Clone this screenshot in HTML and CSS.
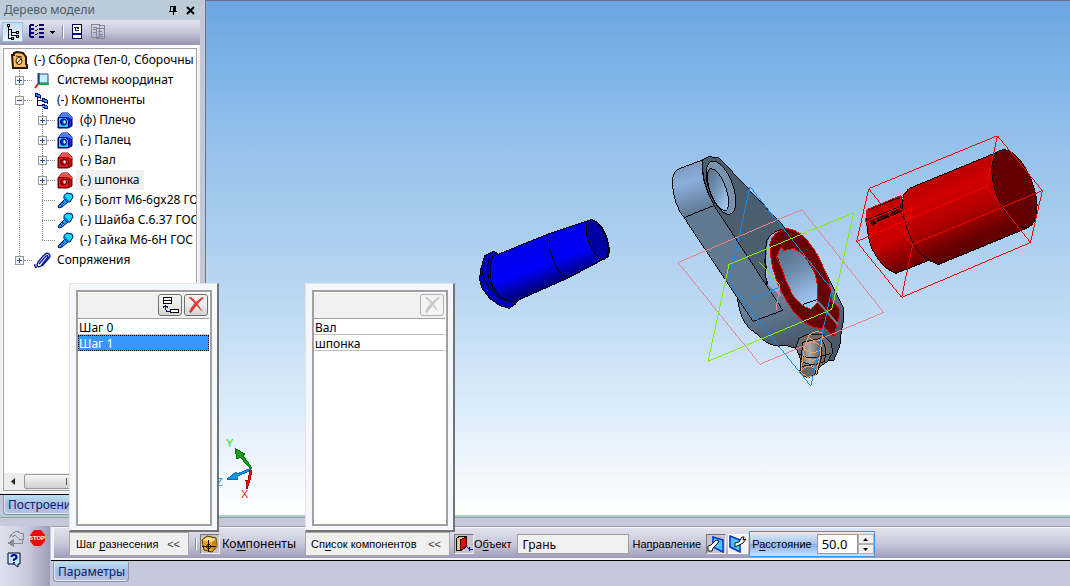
FILE: index.html
```html
<!DOCTYPE html>
<html lang="ru">
<head>
<meta charset="utf-8">
<title>Сборка</title>
<link rel="stylesheet" href="styles.css">
</head>
<body>
<svg class="defs" width="0" height="0" aria-hidden="true">
  <defs>
    <symbol id="part" viewBox="0 0 17 17">
      <path class="part-side" d="M1 6 5 1h6l4 4v9l-4 2H1z"/>
      <path class="part-top" d="M5 1h6l4 4v2l-4-2H2z"/>
      <path class="part-face" d="M1.500 5.500h7l3 3v7h-10z"/>
      <ellipse cx="6.500" cy="10" rx="3" ry="3.200" class="part-hole"/>
      <path d="M7 8q2 0 2 2.500L7.500 12 6 10z" class="part-shine"/>
    </symbol>
    <symbol id="bolt" viewBox="0 0 17 17">
      <path d="M2 13 8 7l3 3-6 5-3 1-1-1z" fill="#19a5d8" stroke="#000080"/>
      <path d="M3 12l2 2M5 10l2 2" stroke="#000080"/>
      <path d="M7 3.500 10 1l5 1 1 3-3 5-3 0-3-3z" fill="#00e0f0" stroke="#000080"/>
      <path d="M7 4v3l3 3h3z" fill="#0860d0"/>
    </symbol>
    <symbol id="cross" viewBox="0 0 18 18">
      <path d="M1.500 1.500 4 1q4 3 6 6t6 9q-4-3-7-7T1.500 1.500z" fill="currentColor"/>
      <path d="M15 1l2 1q-4 3-7 7t-6 8l-2-1q2-5 5-8t8-7z" fill="currentColor"/>
    </symbol>
  </defs>
</svg>
<div class="app">
  <main class="workspace">
    <aside class="sidebar">
      <header class="panel-title">
        <h1>Дерево модели</h1>
        <button class="plain" aria-label="Закрепить"><svg width="9" height="10" shape-rendering="crispEdges"><path d="M1 1h6v5h1v1H0V6h1zM4 7h1v3H4z" fill="#000"/><path d="M2 2h2v4H2z" fill="#bccbd8"/></svg></button>
        <button class="plain" aria-label="Закрыть"><svg width="9" height="9"><path d="M1 1l7 7M8 1 1 8" stroke="#000" stroke-width="2"/></svg></button>
      </header>
      <div class="tree-tools">
        <button class="tool active" aria-label="Дерево"><svg width="18" height="18" shape-rendering="crispEdges"><path d="M4.500 3v12h3M4 6.500h3v6h5M7 9.500h5" fill="none" stroke="#000"/><path d="M3.500 1.500h2v2h-2zM12.500 8.500h2v2h-2zM12.500 12.500h2v2h-2zM7.500 14.500h2v2h-2z" fill="#ffe33a" stroke="#000"/></svg></button>
        <button class="tool wide" aria-label="Состав"><svg width="26" height="16" shape-rendering="crispEdges"><path d="M1 1v12M1 1h4M1 5h4M1 9h4M1 13h4M10 1h5M10 5h5M10 9h5M10 13h5" stroke="#000070" stroke-width="2" fill="none"/><path d="M6 2l1 1 2-2M6 6l1 1 2-2M6 10l1 1 2-2" stroke="#222" fill="none"/><path d="M21 7h5l-2.500 3z"/></svg></button>
        <span class="bar-sep"></span>
        <button class="tool" aria-label="Документ"><svg width="12" height="16" shape-rendering="crispEdges"><path d="M.5.500h9v14h-9z" fill="#fff" stroke="#000060"/><path d="M1 9h9v2H1z" fill="#000090"/><path d="M2 3.500h5M3.500 4v3M4 6.500h3M5 4.500h2" stroke="#222" fill="none"/></svg></button>
        <button class="tool" aria-label="Копия документа" disabled><svg width="17" height="16" shape-rendering="crispEdges" fill="none" stroke="#85859a"><path d="M1.500.5h8v13h-8zM6.500 4.500h8v10h-8zM3 3.500h4M3 5.500h3M3 8.500h3M8 7.500h4M8 10.500h5M8 12.500h5M10 1.500h4v3"/></svg></button>
      </div>
      <div class="tree-frame">
        <nav class="tree" aria-label="Дерево модели">
          <div class="row root"><svg width="17" height="18"><path d="M1 4h2V2l3-1 6 1 3 4v7l1 1v3H2z" fill="#fdbd62" stroke="#2b1600" stroke-width="2"/><ellipse cx="8" cy="10" rx="3" ry="3.500" fill="#ffe0a0" stroke="#3a2000"/><path d="M6 12l4-4M5 5l6 1" stroke="#3a2000"/></svg><span>(-) Сборка (Тел-0, Сборочны</span></div>
          <ul class="level">
            <li><div class="row"><button class="exp" aria-label="Развернуть"></button><i class="link"></i><svg width="17" height="17"><path d="M5 2h9v9H5z" fill="#c8f0f4" stroke="#20409a"/><path d="M4 12 1 16" stroke="#e02020" stroke-width="2"/><path d="M4 12h11" stroke="#10b040" stroke-width="2"/><path d="M4.500 12V1" stroke="#20408a" stroke-width="2"/></svg><span>Системы координат</span></div></li>
            <li><div class="row"><button class="exp open" aria-label="Свернуть"></button><i class="link"></i><svg width="17" height="17" shape-rendering="crispEdges"><path d="M3.500 4v9.500H9M4 8.500h5" fill="none" stroke="#000060"/><path d="M1 1l5 2v3L1 4zM8 6l5 2v3L8 9zM8 12l5 2v3l-5-2z" fill="#1aa6f0" stroke="#000080"/></svg><span>(-) Компоненты</span></div>
              <ul class="level inner">
                <li><div class="row"><button class="exp" aria-label="Развернуть"></button><i class="link"></i><svg class="blue" width="17" height="17"><use href="#part"/></svg><span>(ф) Плечо</span></div></li>
                <li><div class="row"><button class="exp" aria-label="Развернуть"></button><i class="link"></i><svg class="blue" width="17" height="17"><use href="#part"/></svg><span>(-) Палец</span></div></li>
                <li><div class="row"><button class="exp" aria-label="Развернуть"></button><i class="link"></i><svg class="red" width="17" height="17"><use href="#part"/></svg><span>(-) Вал</span></div></li>
                <li><div class="row picked"><button class="exp" aria-label="Развернуть"></button><i class="link"></i><svg class="red" width="17" height="17"><use href="#part"/></svg><span>(-) шпонка</span></div></li>
                <li><div class="row"><i class="link long"></i><svg width="17" height="17"><use href="#bolt"/></svg><span>(-) Болт М6-6gx28 ГО</span></div></li>
                <li><div class="row"><i class="link long"></i><svg width="17" height="17"><use href="#bolt"/></svg><span>(-) Шайба С.6.37 ГОС</span></div></li>
                <li><div class="row"><i class="link long"></i><svg width="17" height="17"><use href="#bolt"/></svg><span>(-) Гайка М6-6Н ГОС</span></div></li>
              </ul>
            </li>
            <li><div class="row"><button class="exp" aria-label="Развернуть"></button><i class="link"></i><svg width="17" height="17" fill="none" stroke="#0a1a98" stroke-width="1.400"><path d="M5 12l7-8q2-1 2 1l-7 9q-3 2-4-1l1-3 6-7q3-3 5-1 2 2 0 4l-7 8M1 12q-1 3 2 3.500"/></svg><span>Сопряжения</span></div></li>
          </ul>
        </nav>
        <div class="hscroll"><svg width="17" height="15"><path d="M11 4v7L7 7.500z" fill="#222"/></svg><div class="thumb"><i></i><i></i><i></i></div></div>
      </div>
      <footer class="tabs"><button class="tab">Построение</button></footer>
    </aside>
    <section class="viewport" aria-label="Модель">
      <svg class="scene" viewBox="206 0 864 515" preserveAspectRatio="xMinYMin meet">
        <defs>
          <linearGradient id="gPin" gradientUnits="userSpaceOnUse" x1="545" y1="236" x2="562" y2="280"><stop offset="0" stop-color="#0000e8"/><stop offset=".55" stop-color="#0000fa"/><stop offset="1" stop-color="#00007c"/></linearGradient>
          <linearGradient id="gShaft" gradientUnits="userSpaceOnUse" x1="950" y1="170" x2="982" y2="248"><stop offset="0" stop-color="#b80000"/><stop offset=".25" stop-color="#d00000"/><stop offset=".55" stop-color="#b00000"/><stop offset=".85" stop-color="#680000"/><stop offset="1" stop-color="#5c0000"/></linearGradient>
          <linearGradient id="gShaft2" gradientUnits="userSpaceOnUse" x1="885" y1="205" x2="910" y2="268"><stop offset="0" stop-color="#c00000"/><stop offset=".5" stop-color="#cc0000"/><stop offset="1" stop-color="#680000"/></linearGradient>
          <linearGradient id="gBoss" gradientUnits="userSpaceOnUse" x1="690" y1="162" x2="705" y2="212"><stop offset="0" stop-color="#7c9abc"/><stop offset=".35" stop-color="#8aaedb"/><stop offset="1" stop-color="#5d7690"/></linearGradient>
          <linearGradient id="gFoot" gradientUnits="userSpaceOnUse" x1="775" y1="300" x2="790" y2="345"><stop offset="0" stop-color="#66809b"/><stop offset="1" stop-color="#48596a"/></linearGradient>
          <linearGradient id="gHole" x1="0" y1="0" x2=".35" y2="1"><stop offset="0" stop-color="#506880"/><stop offset=".5" stop-color="#708eae"/><stop offset="1" stop-color="#9dc5f2"/></linearGradient>
          <linearGradient id="gBolt"><stop offset="0" stop-color="#666"/><stop offset=".45" stop-color="#aaa"/><stop offset="1" stop-color="#555"/></linearGradient>
        </defs>
        <g class="edges" stroke="#000">
          <path fill="#0000b8" d="M499 253 494 251 485 255 482 265 480 278 482 287 490 298 500 305 510 308 517 303 520 298z"/>
          <path fill="none" d="M482 268Q484 284 502 300"/>
          <path fill="url(#gPin)" d="M493 256 550 233 592 219Q606 222 610 247 611 257 604 259L570 277 514 302Q499 299 493 284 488 268 493 256z"/>
          <path fill="none" d="M550 233Q548 246 555 262T570 277M490 257Q485 270 492 285T511 301"/>
          <ellipse cx="598" cy="239" rx="9" ry="21" transform="rotate(-20 598 239)" fill="#0000a4"/>
        </g>
        <g class="edges" stroke="#000">
          <path fill="url(#gFoot)" d="M768 235Q763 255 770 278L754 321 738 295Q741 325 757 333 771 349 787 345L797 348 804 358 835 360 841 346 842 335 845 318Q846 307 842 302L830 278 810 242z"/>
          <path fill="#4a5e70" d="M704 159 710 156 720 157 787 228Q773 230 768 240 764 258 768 286L715 205Q701 178 704 159z"/>
          <path fill="#8fb4de" stroke="none" d="M787 229Q773 230 769 240 766 256 769 284L782 296 772 262 771 244z"/>
          <path fill="url(#gBoss)" d="M704 159 680 168Q673 172 673 182 675 205 685 217L715 205Q700 177 704 159z"/>
          <path fill="#607991" d="M685 217 715 205 784 310 754 321z"/>
          <ellipse cx="722" cy="187" rx="12" ry="28" transform="rotate(-20 722 187)" fill="#7892b0"/>
          <ellipse cx="719" cy="189" rx="8" ry="22" transform="rotate(-20 719 189)" fill="url(#gHole)"/>
        </g>
        <path class="edges" fill="url(#gHole)" stroke="#000" d="M778 255 782 246 795 247 807 255 820 280 820 302 811 310 802 305 793 295z"/>
        <path fill="none" stroke="#000" class="edges" d="M804 304 819 299"/>
        <path class="edges" fill="#690000" stroke="#f00000" fill-rule="evenodd" d="M788 228Q773 231 771 244 771 267 782 290 793 313 807 323 818 330 826 327L835 337 838 324 841 315 840 307 833 300Q834 288 825 268 818 250 806 237 798 229 788 228zM782 246 785 250 795 248Q808 254 814 268 820 280 819 302L812 309Q800 305 793 293 787 282 783 268L778 256z"/>
        <path fill="none" stroke="#71859a" stroke-width="2" d="M819 301 839 324"/>
        <g class="edges" stroke="#111">
          <path fill="#6d6b6b" d="M797 347 800 338 808 334 824 334 832 342 834 352 829 361 819 368 805 367z"/>
          <path fill="url(#gBolt)" d="M804 342 822 338 823 356 818 374 808 377 801 371z"/>
          <path fill="none" d="M799 353Q809 362 832 353M801 360Q812 368 826 361M822 337l5 11-1 13"/>
          <ellipse cx="809" cy="371" rx="8" ry="6" fill="#666"/>
        </g>
        <path class="edges" fill="none" stroke="#f7a35c" d="M810 335Q816 329 824 333L823 340 821 357 817 375 809 377 802 372 804 357 806 346 810 335M805 347Q811 356 821 350M804 355Q812 363 821 358M809 337Q817 343 824 338M806 345Q812 338 823 346M802 371Q809 361 818 370"/>
        <g class="edges" fill="none">
          <path stroke="#f08088" d="M679 262 803 209 885 312 761 364zM781 285 777 310"/>
          <path stroke="#0c8cf2" d="M751 186 833 289 812 386 730 283zM752 299 780 287"/>
          <path stroke="#80f000" d="M855 212 730 264 709 361 833 309zM761 262 781 285"/>
        </g>
        <g class="edges" stroke="#100">
          <path fill="url(#gShaft2)" d="M868 210 902 195 930 260 897 273Q884 269 873 248 867 232 868 210z"/>
          <path fill="url(#gShaft)" d="M910 188 1000 151 1030 227 940 264Q921 258 913 240 901 214 905 194z"/>
          <ellipse cx="1016" cy="188" rx="19" ry="41" transform="rotate(-20 1016 188)" fill="#650000"/>
          <path fill="#5a0000" d="M876 216 902 206 903 211 874 224 869 219z"/>
          <path fill="none" d="M870 209 901 197Q906 204 893 214L874 223"/>
        </g>
        <path class="edges" fill="none" stroke="#f50000" d="M870 188 999 135 1044 190 1032 242 903 297 858 241zM858 241 988 186 999 135M988 186 1032 242M870 188 914 244 1044 190M914 244 903 297M870 188 858 241M868 209 902 195 913 208 911 218 876 233 867 221zM867 221 901 207 911 218M868 209 879 222 913 208M879 222 876 233M902 195 901 207"/>
        <g class="edges">
          <path fill="#15a01e" stroke="#087010" d="M252 468 243 455 245 454 235 448 237 459 240 457 250 468z"/>
          <path fill="#1296e8" stroke="#0b6cb0" d="M251 468 237 474 236 472 227 479 238 479 238 476 251 470z"/>
          <path fill="#ee1010" stroke="#b00000" d="M250 470 248 480 246 480 247 489 250 481 250 480 252 470z"/>
        </g>
        <g class="axis"><text x="226" y="447" fill="#18e018">Y</text><text x="216" y="486" fill="#1296e8">Z</text><text x="241" y="498" fill="#f02020">X</text></g>
      </svg>
    </section>
  </main>

  <section class="props">
    <div class="side-tools">
      <button class="plain" aria-label="Применить" disabled><svg width="17" height="17" shape-rendering="crispEdges" fill="none" stroke="#8c8c90"><path d="M2 8 6 3l4-2 3 2h3v6h-4L9 6M5 7l3-2 2 2M15 10v3H5"/><path d="M1 13l5-3v6z" fill="#8c8c90"/></svg></button>
      <button class="plain" aria-label="Прервать"><svg width="17" height="16"><path d="M5 0h7l4 5v6l-4 5H5l-4-5V5z" fill="#f00808"/><text x="8" y="10" class="stop-text">STOP</text></svg></button>
      <button class="plain" aria-label="Справка"><svg width="14" height="16"><path d="M1 1h12v11h-2v3l-4-3H1z" fill="#c0e8ff" stroke="#000030"/><path d="M4.500 5q0-2 2.500-2t2.500 2T7 7.500V9M7 10v1.500" fill="none" stroke="#0000a0" stroke-width="2"/></svg></button>
    </div>
    <div class="prop-main">
      <form class="prop-bar" onsubmit="return false">
        <div class="drop steps">
          <button type="button" class="drop-btn"><span>Шаг <u>р</u>азнесения</span><span class="chev">&lt;&lt;</span></button>
          <div class="popup">
            <div class="popup-frame">
              <div class="popup-tools">
                <button type="button" aria-label="Добавить шаг"><svg width="18" height="18" shape-rendering="crispEdges"><path d="M2.500 1.500h8v6h-8zM2 4.500h9M9.500 13.500h8v3h-8z" fill="#fff" stroke="#000"/><path d="M9 15.500H6l-1.500-2V10M2 11.500l2.500-2 2.500 2" fill="none" stroke="#000090"/></svg></button>
                <button type="button" class="del" aria-label="Удалить шаг"><svg width="18" height="18"><use href="#cross"/></svg></button>
              </div>
              <ul class="list"><li>Шаг 0</li><li class="sel">Шаг 1</li></ul>
            </div>
          </div>
        </div>
        <span class="bar-sep"></span>
        <button type="button" class="pick comp-pick" id="comp" aria-label="Компоненты"><svg width="18" height="18"><path d="M1 5 6 1l9 2 1 9-5 5-8-2z" fill="#eea414" stroke="#5a3500"/><path d="M2 5 7 2l8 2-4 3z" fill="#ffe09a"/><path d="M11 7l4-3 1 8-5 4z" fill="#c8860c"/><path d="M1 11.500h14M7.500 5v12M5 11.500l2.500-3 3 3-3 3z" stroke="#1a1000" fill="none"/></svg></button>
        <label class="comp-label" for="comp">Ко<u>м</u>поненты</label>
        <div class="drop comps">
          <button type="button" class="drop-btn"><span>Сп<u>и</u>сок компонентов</span><span class="chev">&lt;&lt;</span></button>
          <div class="popup">
            <div class="popup-frame">
              <div class="popup-tools"><button type="button" class="off" aria-label="Удалить компонент" disabled><svg width="18" height="18"><use href="#cross"/></svg></button></div>
              <ul class="list"><li>Вал</li><li>шпонка</li></ul>
            </div>
          </div>
        </div>
        <button type="button" class="pick obj-pick" aria-label="Выбрать объект"><svg width="18" height="18" shape-rendering="crispEdges"><path d="M1 4 5 1h6v10l-5 5-5-1z" fill="#f6c080" stroke="#000"/><path d="M5 5l6-3v10l-6 4z" fill="#f00000" stroke="#300"/><path d="M10 10l4 4h4M14 12v4" stroke="#0000a0" fill="none"/></svg></button>
        <label for="object">О<u>б</u>ъект</label>
        <input id="object" class="object" type="text" value="Грань" readonly>
        <span class="dir-label">На<u>п</u>равление</span>
        <button type="button" class="pick" aria-label="Прямое направление"><svg width="18" height="18"><path d="M6 2l10 3v12L6 12z" fill="#50c4fa" stroke="#0030d0" stroke-width="1.500"/><path d="M1 16v-5l3-1 5-5 3 1-2 3-4 4-1 3z" fill="#fff" stroke="#111"/></svg></button>
        <button type="button" class="pick up" aria-label="Обратное направление"><svg width="18" height="18"><path d="M1 1l10 4v12L1 12z" fill="#50c4fa" stroke="#0030d0" stroke-width="1.500"/><path d="M6 12V8l4-1 3-5h2l-1 3 3-1-3 4-4 2z" fill="#fff" stroke="#111"/></svg></button>
        <div class="distance">
          <label for="dist">Р<u>а</u>сстояние</label>
          <input id="dist" type="text" value="50.0">
          <div class="spin"><button type="button" aria-label="Больше"><svg width="5" height="3"><path d="M0 3h5L2.500 0z"/></svg></button><button type="button" aria-label="Меньше"><svg width="5" height="3"><path d="M0 0h5L2.500 3z"/></svg></button></div>
        </div>
      </form>
      <div class="prop-tabs"><button class="tab">Параметры</button></div>
    </div>
  </section>
</div>
</body>
</html>
```
FILE: styles.css
```css
* { box-sizing: border-box; }
body { margin: 0; font: 12px/16px "Noto Sans", "Open Sans", sans-serif; color: #000; background: #c5c9d9; }
button, input { font: inherit; color: inherit; padding: 0; margin: 0; }
svg { display: block; flex: none; }
.defs { position: absolute; }
ul { list-style: none; margin: 0; padding: 0; }
u { text-underline-offset: 2px; }
.plain { border: 0; background: none; display: flex; }

.app { min-height: 100vh; display: flex; flex-direction: column; }
.workspace { flex: 1; display: flex; border-bottom: 1px solid #999eaa; box-shadow: inset 0 -2px #a9d3c6; padding-bottom: 2px; }

/* model tree panel */
.sidebar { width: 206px; flex: none; display: flex; flex-direction: column; border-right: 1px solid #6e7686; padding-right: 5px; background: #c3c7d7; }
.panel-title { height: 20px; padding: 0 5px 0 4px; display: flex; align-items: center; gap: 8px; background: #bccbd8; }
.panel-title h1 { margin: 0; flex: 1; font-size: 12px; font-weight: 400; line-height: 18px; color: #505c68; }
.tree-tools { height: 25px; padding: 0 2px 2px; display: flex; align-items: center; gap: 6px; background: linear-gradient(#e4e4f0, #c5c4d8 50%, #9693b2); }
.tool { border: 0; background: none; height: 20px; display: flex; align-items: center; }
.tool.active { width: 21px; justify-content: center; border: 1px solid #8fc4e8; background: linear-gradient(#c4dcf2, #e8f4fd); }
.tool.wide { width: 27px; }
.bar-sep { width: 2px; height: 14px; border-left: 1px solid #8c8ca4; border-right: 1px solid #fff; }
.tree-tools .bar-sep { margin-right: 2px; }
.tree-frame { flex: 1; display: flex; flex-direction: column; padding: 2px; border: 2px solid #f0f0f0; border-top: 1px solid #fff; background: #fff; outline: 1px solid #a0a0a0; outline-offset: -4px; }
.tree { flex: 1; overflow: hidden; padding: 2px 0 0 1px; }
.row { height: 20px; display: flex; align-items: center; white-space: nowrap; }
.row span { margin-left: 2px; padding: 0 4px; line-height: 20px; }
.row.root { padding-left: 6px; }
.root span { padding-right: 0; }
.picked span { background: #f0f0f0; }
.level { position: relative; padding-left: 10px; }
.level.inner { padding-left: 23px; }
.level::before { content: ""; position: absolute; left: 14px; top: 0; bottom: 10px; border-left: 1px dotted #888; }
.level.inner::before { left: 27px; top: -4px; }
.exp { width: 9px; height: 9px; flex: none; position: relative; border: 1px solid #979797; background: linear-gradient(#2b4e94, #2b4e94) center / 5px 1px no-repeat, linear-gradient(#2b4e94, #2b4e94) center / 1px 5px no-repeat, #f4f4f4; }
.exp.open { background: linear-gradient(#2b4e94, #2b4e94) center / 5px 1px no-repeat, #f4f4f4; }
.link { width: 8px; flex: none; margin-right: 2px; border-top: 1px dotted #888; }
.link.long { width: 13px; margin-left: 4px; }
.blue { --side: #0828d8; --face: #10d8f8; --top: #4a80f8; --hole: #0828c8; --line: #000070; --shine: #b8f0ff; }
.red { --side: #c80000; --face: #fa1414; --top: #fa5050; --hole: #a00000; --line: #6a0000; --shine: #ffd0d0; }
.part-side { fill: var(--side); stroke: var(--line); }
.part-face { fill: var(--face); stroke: var(--line); }
.part-top { fill: var(--top); }
.part-hole { fill: var(--hole); stroke: var(--line); }
.part-shine { fill: var(--shine); }
.hscroll { height: 17px; display: flex; align-items: center; background: #ececec; }
.thumb { margin-left: 3px; width: 90px; height: 15px; display: flex; gap: 1px; align-items: center; justify-content: center; border: 1px solid #999; border-radius: 2px; background: linear-gradient(#f6f6f6, #e4e4e4 50%, #cfcfcf); }
.thumb i { width: 2px; height: 7px; border-right: 1px solid #555; }
.tabs { height: 21px; border-top: 1px solid #000; padding-left: 3px; }
.tab { height: 20px; padding: 0 3px 0 4px; border: 1px solid #8793b5; border-top: 0; border-radius: 0 0 4px 4px; color: #0c1c78; background: linear-gradient(#b8e2f2, #a6bde0 50%, #b8c2e0); box-shadow: inset 1px -1px #e2e8f6; display: block; white-space: nowrap; }

/* 3D canvas */
.viewport { position: relative; flex: 1; border-top: 1px solid #68727e; background: linear-gradient(#6aa6e4, #93c0ea 27%, #bbd8f3 58%, #e0eefa 82%, #fff); }
.scene { position: absolute; inset: 0; width: 100%; height: 100%; }
.edges { shape-rendering: crispEdges; }
.axis { font: 11px "Liberation Sans", sans-serif; }

/* property panel */
.props { display: flex; margin-top: 8px; height: 60px; }
.side-tools { width: 50px; padding: 4px 4px 0 7px; display: grid; grid-template-columns: 17px 17px; gap: 5px; align-content: start; background: linear-gradient(90deg, #dfe1ee, #c9c9dc 55%, #a09db8); }
.stop-text { font: bold 6px "Liberation Sans", sans-serif; fill: #fff; text-anchor: middle; }
.prop-main { flex: 1; min-width: 0; }
.prop-bar { height: 35px; padding: 1px 0 0 14px; margin-left: 1px; display: flex; align-items: center; border-top: 1px solid #a0a0a8; border-bottom: 1px solid #000; box-shadow: inset 3px 1px #f4f4f8, inset 0 -2px #f4f4f8; background: linear-gradient(#e4e3ef, #c9c8db 50%, #9896b4); font-family: "Liberation Sans", sans-serif; font-size: 11px; }
.drop { position: relative; flex: none; margin-left: 4px; }
.drop-btn { width: 120px; height: 24px; padding: 0 8px 0 6px; border: 1px solid #a6a6a6; background: #f0f0f0; display: flex; align-items: center; justify-content: space-between; white-space: nowrap; }
.comps .drop-btn { width: 145px; padding-left: 5px; }
.chev { font-size: 11px; color: #333; }
.popup { position: absolute; left: 0; bottom: 100%; width: 150px; height: 249px; padding: 6px 5px 4px 6px; border: 1px solid #e3e3e3; border-right: 2px solid #747474; border-bottom: 2px solid #747474; background: #f4f7fc; }
.popup-frame { height: 100%; border: 2px solid #a0a0a0; padding: 1px 1px 0 0; background: #fff; }
.popup-tools { height: 26px; padding: 1px; display: flex; gap: 2px; justify-content: flex-end; background: #f0f0f0; border-bottom: 1px solid #a0a0a0; }
.popup-tools button { width: 24px; height: 22px; display: flex; align-items: center; justify-content: center; border: 1px solid #707070; border-radius: 3px; background: linear-gradient(#f3f3f3, #ebebeb 50%, #d4d4d4); }
.popup-tools .del { color: #e23b3b; }
.popup-tools .off { color: #c8c8c8; border-color: #adb2b5; background: #f4f4f4; }
.list { font: 12px "Noto Sans", "Open Sans", sans-serif; }
.list li { height: 16px; padding-left: 1px; line-height: 17px; border-bottom: 1px solid #c0c0c0; }
.list .sel { color: #fff; background: #3399ff; border: 0; outline: 1px dotted #000; outline-offset: -1px; }
.steps + .bar-sep { margin: 0 3px 0 6px; }
.pick { width: 20px; height: 20px; flex: none; border: 1px solid #777; border-right-color: #eee; border-bottom-color: #eee; background: #c4c4c8; display: flex; align-items: center; justify-content: center; }
.pick.up { margin: 0 1px 0 2px; background: #f2f2f2; border-color: #fff; }
.comp-label { width: 78px; margin-left: 2px; font: 12px/16px "Noto Sans", "Open Sans", sans-serif; }
.comps { margin-left: 5px; }
.obj-pick { margin-left: 4px; }
.object { width: 112px; height: 20px; margin: 0 3px 0 6px; padding: 0 4px; border: 1px solid #a0a0a0; background: #f0f0f0; font: 12px "Noto Sans", "Open Sans", sans-serif; }
.dir-label { margin-right: 5px; }
.distance { display: flex; align-items: center; height: 26px; padding-left: 2px; border: 1px solid #3c96ee; background: linear-gradient(#e2edfa, #a4c4f0 50%, #8ab2ec 52%, #c8e0fa); }
.distance input { width: 41px; height: 20px; margin-left: 5px; padding: 0 4px; border: 1px solid #999; background: #fff; font: 13px "Noto Sans", "Open Sans", sans-serif; }
.spin { width: 16px; display: grid; }
.spin button { height: 10px; display: flex; align-items: center; justify-content: center; border: 1px solid #b0b0b0; background: #f2f2f2; }
.prop-tabs { padding: 1px 0 0 3px; }
```
